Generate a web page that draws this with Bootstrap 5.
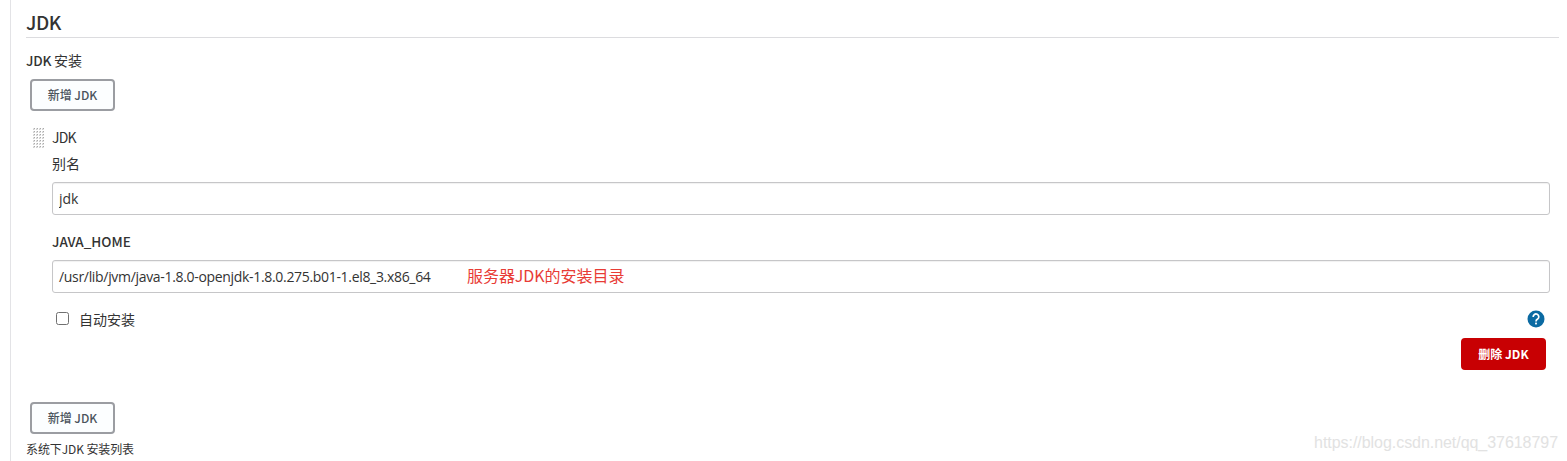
<!DOCTYPE html>
<html lang="zh-CN">
<head>
<meta charset="utf-8">
<meta name="viewport" content="width=device-width, initial-scale=1">
<title>JDK</title>
<link href="https://cdn.jsdelivr.net/npm/bootstrap@5.3.0/dist/css/bootstrap.min.css" rel="stylesheet">
<style>
  body { font-family: "Noto Sans CJK SC", sans-serif; font-size: 14px; line-height: 20px; color: #333; background: #fff; overflow: hidden; }
  .config-panel { margin-left: 10px; padding: 0 8px 0 15px; height: 461px; border-left: 1px solid #e3e3e6; }
  .section-title { height: 38px; padding-top: 10px; font-size: 19px; line-height: 24px; font-weight: 500; border-bottom: 1px solid #dcdcdf; letter-spacing: -.5px; }
  .fw-label { font-weight: 500; font-size: 13.5px; }
  .list-title { margin-top: 12px; letter-spacing: -.2px; }
  .list-title span { font-size: 14px; font-weight: 400; letter-spacing: 0; }
  .btn-jdk { width: 85px; height: 32px; padding: 0; border: 2px solid #9b9da2; border-radius: 4px; font-size: 12px; line-height: 26px; font-weight: 500; color: #4b545c; background: #fcfeff; }
  .btn-jdk.btn-remove { padding-bottom: 1px; color: #fff; background: #c80003; border-color: #c80003; font-weight: 700; }
  .jdk-item { padding: 17px 8px 0 7px; margin-right: 1px; }
  .drag-handle { width: 19px; flex: none; }
  .drag-handle svg { display: block; }
  .jdk-input { height: 33px; padding: 0 6px; border: 1px solid #c6c6c8; border-radius: 3px; font-family: "Open Sans", "Noto Sans CJK SC", sans-serif; font-size: 14px; color: #333; background: #fff; box-shadow: inset 0 1px 1px rgba(0,0,0,.06); }
  .jdk-path { width: 408px; flex: none; white-space: nowrap; letter-spacing: -.32px; }
  .path-note { font-family: "Noto Sans CJK SC", sans-serif; font-size: 16px; margin-top: -3px; letter-spacing: -.05px; color: #e83c36; }
  .jdk-check.form-check-input { width: 13px; height: 13px; margin: -1px 0 0; border: 1px solid #707070; border-radius: 2.5px; }
  .list-hint { font-size: 12px; line-height: 18px; letter-spacing: -.1px; }
  .site-mark { right: 9px; bottom: 8px; font: 16px/20px "Liberation Sans", sans-serif; letter-spacing: -.05px; color: #e2e2e2; }
</style>
</head>
<body>
<main class="config-panel">
  <h1 class="section-title m-0">JDK</h1>
  <div class="list-title fw-label">JDK <span>安装</span></div>
  <button class="btn btn-jdk d-block ms-1" style="margin-top:9px">新增 JDK</button>
  <section class="jdk-item d-flex">
    <div class="drag-handle">
      <svg width="12" height="21" aria-hidden="true">
        <defs><pattern id="grip" width="3" height="3" patternUnits="userSpaceOnUse"><rect width="2" height="2" fill="#e2e2e2"/><rect x="1" width="1" height="1" fill="#aaa"/><rect y="1" width="1" height="1" fill="#d0d0d0"/></pattern></defs>
        <rect width="12" height="21" fill="url(#grip)"/>
      </svg>
    </div>
    <div class="flex-grow-1">
      <div style="margin-top:-1px;letter-spacing:-.8px">JDK</div>
      <div style="margin-top:6px">别名</div>
      <input class="jdk-input d-block w-100" style="margin-top:9px" type="text" value="jdk" aria-label="别名">
      <label class="fw-label d-block" style="margin-top:16px">JAVA_HOME</label>
      <div class="jdk-input d-flex align-items-center" style="margin-top:9px">
        <span class="jdk-path">/usr/lib/jvm/java-1.8.0-openjdk-1.8.0.275.b01-1.el8_3.x86_64</span>
        <span class="path-note">服务器JDK的安装目录</span>
      </div>
      <div class="d-flex align-items-center ps-1" style="margin-top:16px;padding-right:5px;height:20px">
        <input class="form-check-input jdk-check" type="checkbox" id="autoInstall">
        <label for="autoInstall" style="margin-left:10px">自动安装</label>
        <svg class="ms-auto" width="18" height="18" viewBox="0 0 18 18" aria-label="帮助">
          <circle cx="9" cy="9" r="8.5" fill="#0b6aa2"/>
          <path d="M6.2 7A2.8 2.8 0 1 1 10.6 9.1Q9 10 9 11.5" fill="none" stroke="#fff" stroke-width="1.7"/>
          <rect x="8.1" y="12.6" width="1.8" height="1.8" fill="#fff"/>
        </svg>
      </div>
      <button class="btn btn-jdk btn-remove d-block ms-auto me-1" style="margin-top:9px">删除 JDK</button>
    </div>
  </section>
  <button class="btn btn-jdk d-block ms-1" style="margin-top:32px">新增 JDK</button>
  <div class="list-hint" style="margin-top:6px">系统下JDK 安装列表</div>
</main>
<div class="site-mark position-absolute">https://blog.csdn.net/qq_37618797</div>
<script src="https://cdn.jsdelivr.net/npm/bootstrap@5.3.0/dist/js/bootstrap.bundle.min.js"></script>
</body>
</html>
